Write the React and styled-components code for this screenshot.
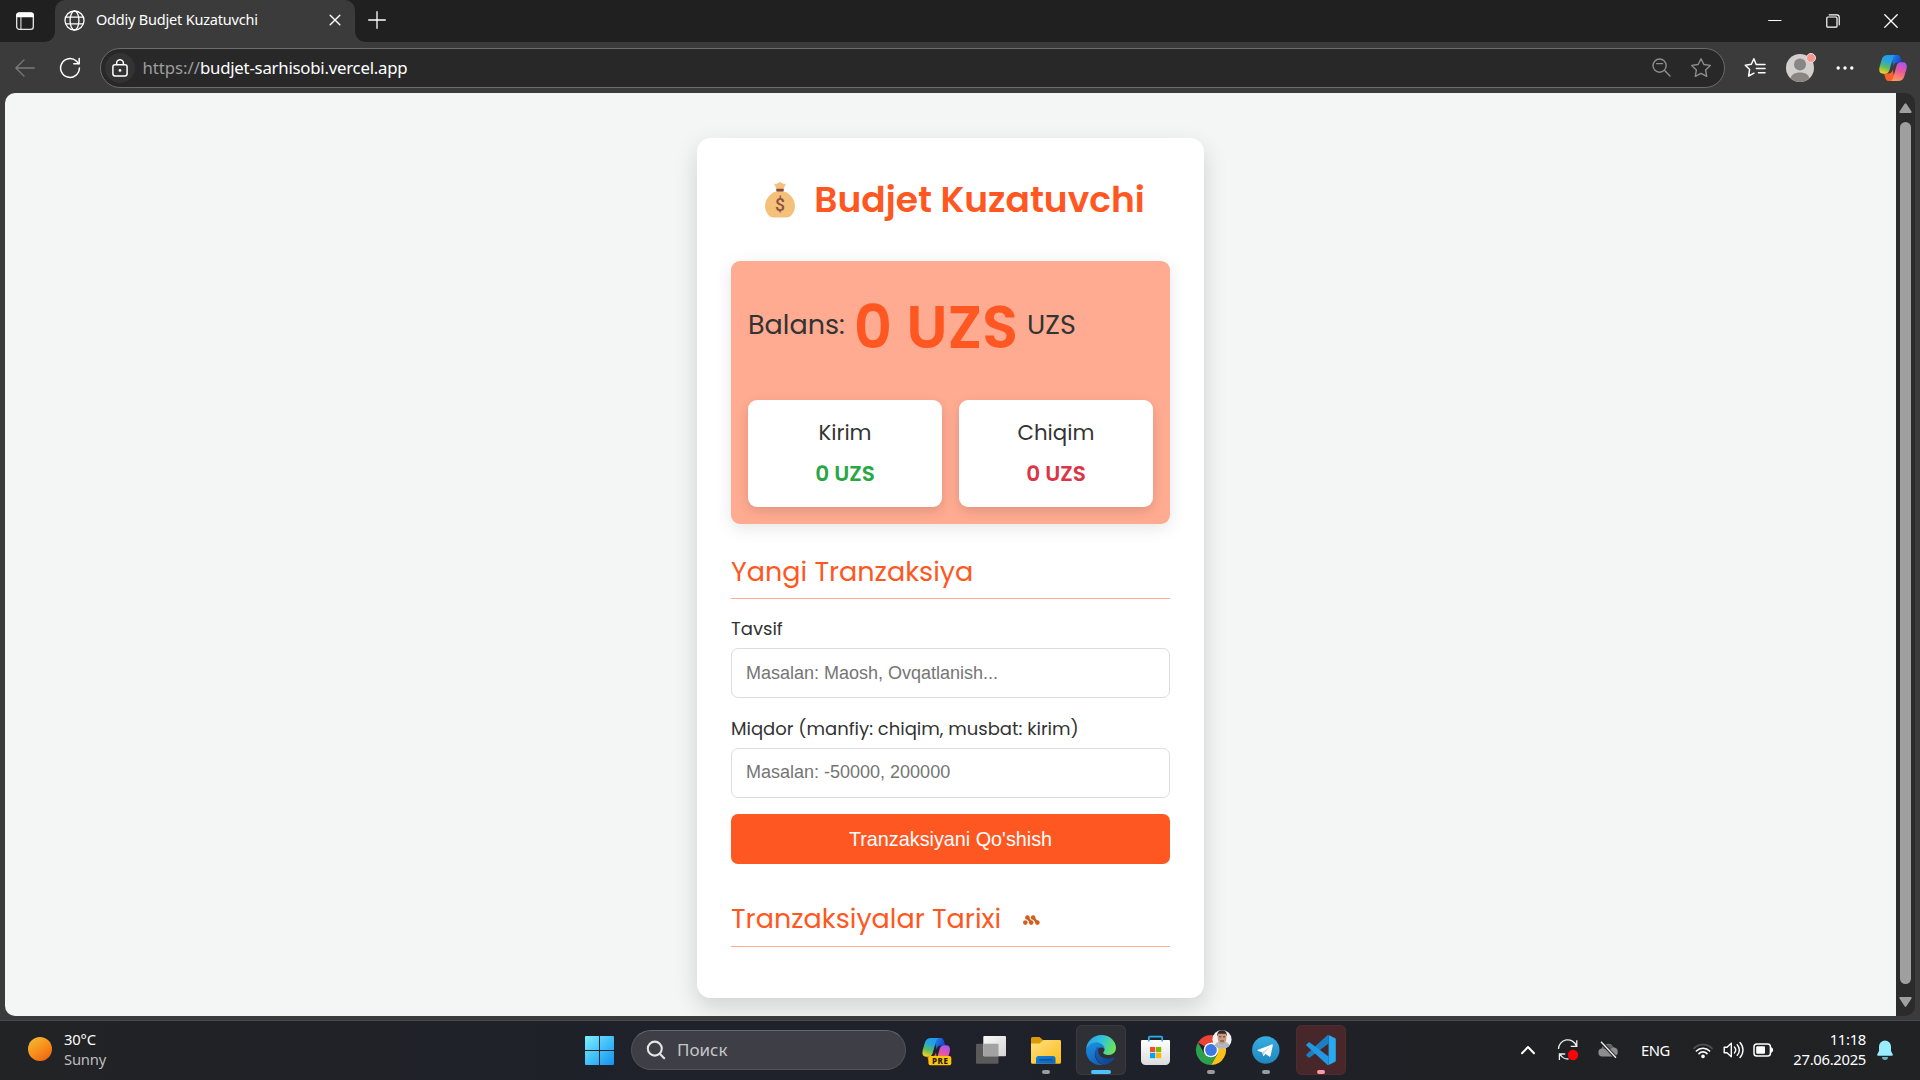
import React from "react";
import styled, { createGlobalStyle, css } from "styled-components";

const GlobalStyle = createGlobalStyle`
  *, *::before, *::after { box-sizing: border-box; }
  body { margin: 0; background: #202020; overflow: hidden; }
  svg { display: block; flex: none; }
`;

const uiFont = `"Noto Sans", "Open Sans", sans-serif`;
const pageFont = `Poppins, Inter, sans-serif`;
const formFont = `"Liberation Sans", Arial, sans-serif`;

const Desktop = styled.div`
  width: 1920px;
  height: 1080px;
  display: flex;
  flex-direction: column;
  background: #3b3b3b;
  font-family: ${uiFont};
  color: #fff;
`;

/* ---------- browser chrome ---------- */

const TabStrip = styled.div`
  height: 42px;
  flex: none;
  display: flex;
  background: #202020;
`;

const StripButton = styled.div`
  width: ${(p) => p.$width}px;
  height: ${(p) => p.$height || 42}px;
  padding-right: ${(p) => p.$nudge || 0}px;
  display: flex;
  align-items: center;
  justify-content: center;
`;

const Tab = styled.div`
  position: relative;
  width: 300px;
  height: 42px;
  padding: 0 13px 2px 8.5px;
  display: flex;
  align-items: center;
  background: #3b3b3b;
  border-radius: 10px 10px 0 0;

  &::before,
  &::after {
    content: "";
    position: absolute;
    bottom: 0;
    width: 10px;
    height: 10px;
  }
  &::before {
    left: -10px;
    background: radial-gradient(circle at 0 0, #202020 9.5px, #3b3b3b 10px);
  }
  &::after {
    right: -10px;
    background: radial-gradient(circle at 100% 0, #202020 9.5px, #3b3b3b 10px);
  }
`;

const TabTitle = styled.span`
  flex: 1;
  margin-left: 11.5px;
  padding-bottom: 2px;
  font-size: 14.5px;
  line-height: 20px;
  letter-spacing: -0.2px;
`;

const WindowControls = styled.div`
  margin-left: auto;
  display: flex;
`;

const Toolbar = styled.div`
  height: 51px;
  flex: none;
  display: flex;
  align-items: center;
  padding: 0 10px 0 11px;
`;

const ToolButton = styled.div`
  width: ${(p) => p.$width || 28}px;
  margin-left: ${(p) => p.$gap || 0}px;
  display: flex;
  justify-content: center;
`;

const AddressBar = styled.div`
  width: 1625px;
  height: 40px;
  margin-left: 16px;
  padding: 0 12px 0 4px;
  display: flex;
  align-items: center;
  border: 1px solid #6c6c6c;
  border-radius: 20px;
  background: #282828;
`;

const SiteInfo = styled.div`
  width: 30px;
  height: 30px;
  display: flex;
  align-items: center;
  justify-content: center;
  border-radius: 50%;
  background: #333;
`;

const Url = styled.div`
  flex: 1;
  margin-left: 7.5px;
  font-size: 16.8px;
  line-height: 24px;
  letter-spacing: -0.23px;
`;

const Scheme = styled.span`
  color: #9d9d9d;
  letter-spacing: -0.05px;
`;

const Avatar = styled.div`
  position: relative;
  width: 28px;
  height: 28px;
`;

const Badge = styled.span`
  position: absolute;
  top: -1px;
  right: -2px;
  width: 10px;
  height: 10px;
  border: 1px solid #e9e2e0;
  border-radius: 50%;
  background: #f8968f;
`;

/* ---------- page viewport ---------- */

const Frame = styled.div`
  height: 928px;
  flex: none;
  padding: 0 5px 4px;
  border-bottom: 1px solid #4a4a4a;
`;

const Viewport = styled.div`
  height: 923px;
  display: flex;
  overflow: hidden;
  border-radius: 10px;
  background: #2b2b2b;
`;

const Page = styled.main`
  flex: 1;
  padding-top: 45px;
  display: flex;
  justify-content: center;
  align-items: flex-start;
  overflow: hidden;
  background: #f4f6f5;
  font-family: ${pageFont};
  color: #333;
`;

const Scrollbar = styled.div`
  width: 19px;
  padding: 10px 0 9px;
  display: flex;
  flex-direction: column;
  align-items: center;
`;

const Thumb = styled.div`
  flex: 1;
  width: 11px;
  margin: 8px 0 12px;
  border-radius: 6px;
  background: #9f9f9f;
`;

const Card = styled.section`
  width: 507px;
  height: 860px;
  padding: 34px;
  border-radius: 14px;
  background: #fff;
  box-shadow: 0 9px 23px rgba(0, 0, 0, 0.15);
`;

const Title = styled.h1`
  margin: 0 0 35px;
  height: 54px;
  padding: 1px 0 0 8px;
  display: flex;
  align-items: center;
  justify-content: center;
  gap: 18px;
  color: #ff5722;
  font-size: 36px;
  font-weight: 600;
  line-height: 55px;
`;

const BalancePanel = styled.div`
  height: 263px;
  padding: 17px;
  border-radius: 9px;
  background: #ffab91;
  box-shadow: 0 4px 17px rgba(0, 0, 0, 0.1);
`;

const BalanceLine = styled.div`
  height: 98px;
  margin-bottom: 24px;
  display: flex;
  align-items: center;
  gap: 9px;
  font-size: 27px;
`;

const BalanceLabel = styled.span`
  padding-bottom: 5px;
  line-height: 40px;
`;

const BalanceValue = styled.span`
  padding-top: 2px;
  color: #ff5722;
  font-size: 59.4px;
  font-weight: 600;
  line-height: 90px;
`;

const Summary = styled.div`
  display: flex;
  gap: 17px;
`;

const SummaryCard = styled.div`
  flex: 1;
  height: 107px;
  padding-top: 17px;
  display: flex;
  flex-direction: column;
  gap: 9px;
  border-radius: 9px;
  background: #fff;
  box-shadow: 0 4px 12px rgba(0, 0, 0, 0.13);
  font-size: 21.3px;
  line-height: 32px;
  text-align: center;
`;

const Amount = styled.span`
  font-size: 21.6px;
  font-weight: 600;
  color: ${(p) => p.$color};
`;

const SectionHeading = styled.h2`
  height: 48px;
  margin: ${(p) => p.$top}px 0 0;
  display: flex;
  border-bottom: 1px solid #ffab91;
  color: #ff5722;
  font-size: 27px;
  font-weight: 400;
  line-height: ${(p) => p.$line || 40}px;
`;

const HistoryIcon = styled.svg`
  margin: 16px 0 0 22px;
`;

const Fields = styled.div`
  margin-top: 16px;
  display: flex;
  flex-direction: column;
  gap: 17px;
`;

const Field = styled.label`
  display: flex;
  flex-direction: column;
  gap: 6px;
  font-size: 18px;
  line-height: 27px;
`;

const Input = styled.input`
  width: 100%;
  height: 50px;
  padding: ${(p) => (p.$low ? "1px 13px 0 14px" : "0 13px 1px 14px")};
  border: 1px solid #ddd;
  border-radius: 7px;
  background: #fff;
  font-family: ${formFont};
  font-size: 18px;
  outline: none;

  &::placeholder { color: #757575; opacity: 1; }
`;

const SubmitButton = styled.button`
  width: 100%;
  height: 50px;
  margin-top: 16px;
  padding: 1px 0 0;
  border: 0;
  border-radius: 7px;
  background: #ff5722;
  color: #fff;
  font-family: ${formFont};
  font-size: 19.8px;
`;

/* ---------- taskbar ---------- */

const Taskbar = styled.footer`
  height: 59px;
  flex: none;
  padding: 0 26px 1px 0;
  display: flex;
  align-items: center;
  background: linear-gradient(90deg, #222325 0, #202226 12%, #1f212b 35%, #1f212a 62%, #202124 76%, #212224 100%);
`;

const Weather = styled.div`
  width: 575px;
  padding: 0 0 2px 28px;
  display: flex;
  align-items: center;
  gap: 12px;
`;

const Sun = styled.span`
  width: 24px;
  height: 24px;
  border-radius: 50%;
  background: linear-gradient(145deg, #eebc33 5%, #f8901c 50%, #f06a12 85%);
`;

const TwoLines = styled.div`
  display: flex;
  flex-direction: column;
  font-size: 14.8px;
  line-height: 20px;
  letter-spacing: ${(p) => p.$tracking || 0}px;
  ${(p) => p.$right && css`
    width: 74px;
    margin-left: 18px;
    padding-bottom: 2px;
    align-items: flex-end;
  `}
`;

const Muted = styled.span`
  color: #bdbdbd;
`;

const SearchBox = styled.div`
  width: 275px;
  height: 40px;
  margin: 0 5px 0 6px;
  padding-left: 13.5px;
  display: flex;
  align-items: center;
  gap: 11.5px;
  border: 1px solid #4f5158;
  border-top-color: #65666c;
  border-radius: 20px;
  background: #3d3e46;
  color: #c6c6c9;
  font-size: 17px;
  line-height: 24px;
`;

const Apps = styled.div`
  display: flex;
  gap: 5px;
`;

const AppTile = styled.div`
  position: relative;
  width: 50px;
  height: 50px;
  border-radius: 6px;
  background: ${(p) => p.$bg || "transparent"};
  box-shadow: ${(p) => (p.$outline ? `inset 0 0 0 1px ${p.$outline}` : "none")};
`;

const Running = styled.span`
  position: absolute;
  left: 50%;
  bottom: 1px;
  width: ${(p) => p.$width || 8}px;
  height: 4px;
  border-radius: 2px;
  transform: translateX(-50%);
  background: ${(p) => p.$color || "#9a9b9e"};
`;

const Tray = styled.div`
  margin-left: auto;
  display: flex;
  align-items: center;
`;

const TrayItem = styled.div`
  width: ${(p) => p.$width}px;
  margin-left: ${(p) => p.$gap || 0}px;
  display: flex;
  justify-content: center;
  font-size: 14.8px;
  line-height: 20px;
  letter-spacing: -0.45px;
`;

/* ---------- icons ---------- */

const Stroke = ({ w, h, color = "#fff", width = 1.4, children }) => (
  <svg width={w} height={h} viewBox={`0 0 ${w} ${h}`} fill="none" stroke={color} strokeWidth={width} strokeLinecap="round" strokeLinejoin="round">
    {children}
  </svg>
);

const starPath = "M11 1.7 L13.9 7.5 L20.3 8.4 L15.6 12.9 L16.7 19.3 L11 16.3 L5.3 19.3 L6.4 12.9 L1.7 8.4 L8.1 7.5 Z";

const CopilotShape = ({ id }) => (
  <>
    <defs>
      <linearGradient id={`${id}a`} x1="0.6" y1="0" x2="0.3" y2="1">
        <stop offset="0" stopColor="#1e9bf0" />
        <stop offset="0.35" stopColor="#2aa6d8" />
        <stop offset="0.65" stopColor="#5dbb63" />
        <stop offset="1" stopColor="#f6d21c" />
      </linearGradient>
      <linearGradient id={`${id}b`} x1="0.7" y1="0" x2="0.4" y2="1">
        <stop offset="0" stopColor="#a855f7" />
        <stop offset="0.45" stopColor="#e8579c" />
        <stop offset="1" stopColor="#ff9a5a" />
      </linearGradient>
      <linearGradient id={`${id}c`} x1="0" y1="0" x2="1" y2="0.5">
        <stop offset="0" stopColor="#1d8df0" />
        <stop offset="1" stopColor="#1c3fc4" />
      </linearGradient>
    </defs>
    <path d="M12 0 H18.5 C20.6 0 21.3 1.6 22 4 L23 7.5 H19 C16 7.5 15 9 14.3 11.5 Z" fill={`url(#${id}c)`} />
    <path d="M16 26 H9.5 C7.4 26 6.7 24.4 6 22 L5 18.5 H9 C12 18.5 13 17 13.7 14.5 Z" fill="#f8612c" />
    <path d="M9 0 H16.5 C14.8 0.4 14.2 2 13.5 4.5 L10.5 15 C9.8 17.4 8.6 18.7 6 18.7 H4 C0.3 18.7 -0.4 15.3 0.7 11.5 L2.6 5 C3.6 1.6 5.3 0 9 0 Z" fill={`url(#${id}a)`} />
    <path d="M19 26 H11.5 C13.2 25.6 13.8 24 14.5 21.5 L17.5 11 C18.2 8.6 19.4 7.3 22 7.3 H24 C27.7 7.3 28.4 10.7 27.3 14.5 L25.4 21 C24.4 24.4 22.7 26 19 26 Z" fill={`url(#${id}b)`} />
  </>
);

const MoneyBag = () => (
  <svg width="32" height="38" viewBox="0 0 32 38">
    <path d="M12.2 8.5 C12 6 10.6 4.2 10 2.6 C11.6 3.4 13 2.8 13.6 2 C14.2 2.6 14.6 2.2 16 0.6 C17.4 2.2 17.8 2.6 18.4 2 C19 2.8 20.4 3.4 22 2.6 C21.4 4.2 20 6 19.8 8.5 Z" fill="#f4c07a" />
    <path d="M16 10 C7.4 10 1 17.4 1 25 C1 31 4.8 36.6 10 36.6 H22 C27.2 36.6 31 31 31 25 C31 17.4 24.6 10 16 10 Z" fill="#f4c07a" />
    <rect x="12.2" y="7.7" width="7.6" height="2.8" rx="1" fill="#804a42" />
    <text x="16" y="30.2" textAnchor="middle" fontFamily="Roboto, sans-serif" fontSize="17.5" fontWeight="500" fill="#8a5142">$</text>
  </svg>
);

const Footprints = () => (
  <HistoryIcon width="17" height="10" viewBox="0 0 17 10" fill="#d0601f" stroke="#d0601f">
    <path d="M4.5 2.6 L8 7.4 M10.2 2.6 L14 7.4" strokeWidth="2.6" />
    <g stroke="none">
      <circle cx="4.4" cy="2.5" r="2.3" />
      <circle cx="10.1" cy="2.5" r="2.3" />
      <circle cx="2.3" cy="7.6" r="2.3" />
      <circle cx="8.2" cy="7.6" r="2.3" />
      <circle cx="14.4" cy="7.6" r="2.3" />
    </g>
  </HistoryIcon>
);

const Tile = ({ children }) => (
  <svg width="50" height="50" viewBox="0 0 50 50">{children}</svg>
);

const StartIcon = () => (
  <Tile>
    <defs>
      <linearGradient id="win" gradientUnits="userSpaceOnUse" x1="10" y1="11" x2="39" y2="40">
        <stop offset="0" stopColor="#7df0fc" />
        <stop offset="0.5" stopColor="#43c0f8" />
        <stop offset="1" stopColor="#1392f0" />
      </linearGradient>
    </defs>
    <path d="M10 12 a1 1 0 0 1 1-1 H24 V25 H10 Z M25 11 H38 a1 1 0 0 1 1 1 V25 H25 Z M10 26 H24 V40 H11 a1 1 0 0 1-1-1 Z M25 26 H39 V39 a1 1 0 0 1-1 1 H25 Z" fill="url(#win)" />
  </Tile>
);

const CopilotPreIcon = () => (
  <Tile>
    <g transform="translate(11.2 13)"><CopilotShape id="pre" /></g>
    <rect x="17.5" y="31" width="22.8" height="9.3" rx="2" fill="#ffc60a" />
    <text x="29.2" y="38.6" textAnchor="middle" fontFamily="Noto Sans, sans-serif" fontSize="8" fontWeight="800" letterSpacing="0.6" fill="#1d1a10">PRE</text>
  </Tile>
);

const TaskViewIcon = () => (
  <Tile>
    <defs>
      <linearGradient id="tvl" x1="0" y1="0" x2="1" y2="1"><stop offset="0" stopColor="#fafafa" /><stop offset="1" stopColor="#d4d4d4" /></linearGradient>
    </defs>
    <rect x="10" y="18.7" width="22.5" height="20" rx="1" fill="#5a5a5a" />
    <rect x="17.3" y="11" width="22.7" height="20.3" rx="1" fill="url(#tvl)" />
    <path d="M17.3 18.7 H32.5 V31.3 H18.3 a1 1 0 0 1-1-1 Z" fill="#a2a2a2" />
  </Tile>
);

const FolderIcon = () => (
  <Tile>
    <defs>
      <linearGradient id="fol" x1="0" y1="0" x2="1" y2="1"><stop offset="0" stopColor="#ffe084" /><stop offset="1" stopColor="#fbbc17" /></linearGradient>
      <linearGradient id="fob" x1="0" y1="0" x2="1" y2="1"><stop offset="0" stopColor="#1383dc" /><stop offset="1" stopColor="#0f62b6" /></linearGradient>
    </defs>
    <path d="M10 13.5 a1.5 1.5 0 0 1 1.5-1.5 H18.5 L22 15 H38.5 a1.5 1.5 0 0 1 1.5 1.5 V25 H10 Z" fill="#dc9a09" />
    <path d="M10 18.5 H18.5 L22.5 15 H38.5 a1.5 1.5 0 0 1 1.5 1.5 V37.2 a1.5 1.5 0 0 1-1.5 1.5 H11.5 a1.5 1.5 0 0 1-1.5-1.5 Z" fill="url(#fol)" />
    <path d="M15 38.7 V33.5 a2.5 2.5 0 0 1 2.5-2.5 H32 a2.5 2.5 0 0 1 2.5 2.5 V38.7 Z" fill="url(#fob)" />
    <rect x="18" y="34.2" width="13.5" height="1.2" rx="0.6" fill="#0a4c8c" />
  </Tile>
);

const EdgeIcon = () => (
  <Tile>
    <defs>
      <linearGradient id="ed1" x1="0" y1="0.2" x2="1" y2="0.5"><stop offset="0" stopColor="#2a9fe4" /><stop offset="0.5" stopColor="#2fc4dc" /><stop offset="1" stopColor="#6be35a" /></linearGradient>
      <linearGradient id="ed2" x1="0.2" y1="0" x2="0.5" y2="1"><stop offset="0" stopColor="#1b8fe0" /><stop offset="1" stopColor="#1163c0" /></linearGradient>
      <linearGradient id="ed3" x1="0" y1="0" x2="1" y2="0.6"><stop offset="0" stopColor="#1a5fb4" /><stop offset="1" stopColor="#0f4590" /></linearGradient>
    </defs>
    <path d="M10.1 25 C10.5 20.5 15 17.2 20.5 17.2 C26 17.2 29.5 20.5 29.2 24 C24 20 18 24 19 31 C20 36 24 39.5 27 39.8 C17 41.5 9.5 33.5 10.1 25 Z" fill="url(#ed2)" />
    <path d="M20.5 22.5 C17.5 28 20 38 28 39.7 C33 39.2 36.5 36.3 38.3 33.4 C38.8 32.6 38 32 37.2 32.4 C31 35.2 22.5 33 22.2 26.3 C22.1 24.5 22.5 23.3 23.2 22 Z" fill="url(#ed3)" />
    <path d="M10.1 24.5 C10.5 16.5 17 10 25.2 10 C34 10 40 16.4 40 22.8 C40 27.2 36.8 30 32.6 30 C29.2 30 27.2 28.8 27.2 27.8 C27.2 27 28.6 26.3 28.6 24 C28.6 20.4 25 17.4 20.4 17.4 C15 17.4 11.4 20.7 10.1 24.5 Z" fill="url(#ed1)" />
  </Tile>
);

const StoreIcon = () => (
  <Tile>
    <defs>
      <linearGradient id="stw" x1="0" y1="0" x2="0" y2="1"><stop offset="0" stopColor="#ffffff" /><stop offset="1" stopColor="#dcdcde" /></linearGradient>
    </defs>
    <path d="M10 16 a1 1 0 0 1 1-1 H38 a1 1 0 0 1 1 1 V35.5 a4.5 4.5 0 0 1-4.5 4.5 H14.5 a4.5 4.5 0 0 1-4.5-4.5 Z" fill="url(#stw)" />
    <path d="M17.8 16.5 V12.6 a1 1 0 0 1 1-1 H30.2 a1 1 0 0 1 1 1 V16.5" fill="none" stroke="#27b1ee" strokeWidth="1.7" />
    <rect x="19" y="22" width="5.2" height="5.2" fill="#f14f21" />
    <rect x="25" y="22" width="5.2" height="5.2" fill="#7eb900" />
    <rect x="19" y="28" width="5.2" height="5.2" fill="#00a3ee" />
    <rect x="25" y="28" width="5.2" height="5.2" fill="#feb800" />
  </Tile>
);

const ChromeIcon = () => (
  <Tile>
    <path d="M25 25 L12 17.5 A15 15 0 0 1 38 17.5 Z" fill="#ea4335" />
    <path d="M25 17.5 H38 A15 15 0 0 1 25 40 L31.5 28.8 Z" fill="#fbc116" />
    <path d="M12 17.5 A15 15 0 0 0 25 40 L31.5 28.8 L25 25 L18.5 28.8 Z" fill="#2da04e" />
    <circle cx="25" cy="25" r="7.3" fill="#fff" />
    <circle cx="25" cy="25" r="5.9" fill="#3c78e6" />
    <circle cx="36" cy="14.5" r="9.6" fill="#f1f1f3" />
    <path d="M28.7 20.6 C29.6 17.2 33 16.6 36 16.6 C39 16.6 42.4 17.2 43.3 20.6 A9.5 9.5 0 0 1 28.7 20.6 Z" fill="#b3b6bd" />
    <path d="M31.8 10 C31.8 7 34 6.2 36 6.2 C38.2 6.2 40.3 7 40.3 10 V14 C40.3 17 38 18.8 36 18.8 C34 18.8 31.8 17 31.8 14 Z" fill="#c9987c" />
    <path d="M31.4 11.5 C30.6 7 33.4 5.2 36 5.2 C39 5.2 41.4 7 40.7 11.5 L39.8 8.8 H32.3 Z" fill="#33272a" />
    <path d="M33 11.8 H35.2 M37 11.8 H39.2 M34.2 16 H38" stroke="#5b3c34" strokeWidth="1" />
  </Tile>
);

const TelegramIcon = () => (
  <Tile>
    <defs>
      <linearGradient id="tg" x1="0" y1="0" x2="0" y2="1"><stop offset="0" stopColor="#37aee2" /><stop offset="1" stopColor="#1e87c0" /></linearGradient>
    </defs>
    <circle cx="24.8" cy="25" r="13.7" fill="url(#tg)" />
    <path d="M17 24.8 L30.8 19.4 C31.5 19.2 32 19.6 31.8 20.5 L29.5 31 C29.3 31.8 28.8 32 28.2 31.6 L24.7 29 L23 30.7 C22.6 31.1 22.2 31 22.1 30.4 L21.2 27.2 L17.1 25.9 C16.4 25.7 16.4 25.1 17 24.8 Z" fill="#fff" />
    <path d="M21.4 27.2 L29 21.8 L23.6 27.6 L22.6 30.6 Z" fill="#bcd9ea" />
  </Tile>
);

const CodeIcon = () => (
  <Tile>
    <path d="M32.6 10 L39.2 13.2 a1 1 0 0 1 0.6 1 V35.8 a1 1 0 0 1-0.6 1 L32.6 40 Z" fill="#29a9f2" />
    <path d="M32.6 10 V18.4 L13.8 32.6 a1 1 0 0 1-1.2 0 L10.6 30.8 a1 1 0 0 1 0-1.5 L31 10.6 a1.6 1.6 0 0 1 1.6-0.6 Z" fill="#1c7fc4" />
    <path d="M32.6 40 V31.6 L13.8 17.4 a1 1 0 0 0-1.2 0 L10.6 19.2 a1 1 0 0 0 0 1.5 L31 39.4 a1.6 1.6 0 0 0 1.6 0.6 Z" fill="#2398e2" />
  </Tile>
);

const apps = [
  { name: "copilot", Icon: CopilotPreIcon },
  { name: "taskview", Icon: TaskViewIcon },
  { name: "explorer", Icon: FolderIcon, running: {} },
  { name: "edge", Icon: EdgeIcon, bg: "#2f3036", outline: "#3a3b40", running: { $width: 20, $color: "#4cc2ff" } },
  { name: "store", Icon: StoreIcon },
  { name: "chrome", Icon: ChromeIcon, running: {} },
  { name: "telegram", Icon: TelegramIcon, running: {} },
  { name: "code", Icon: CodeIcon, bg: "#472729", outline: "#4d2d2f", running: { $color: "#ff9aa4" } },
];

/* ---------- sections ---------- */

const BrowserHeader = () => (
  <>
    <TabStrip>
      <StripButton $width={55} $nudge={5} $height={41}>
        <svg width="20" height="20" viewBox="0 0 20 20">
          <rect x="1.7" y="2" width="16.6" height="16.4" rx="2.6" fill="none" stroke="#e8e8e8" strokeWidth="1.3" />
          <path d="M1.2 6.2 V4.2 A2.8 2.8 0 0 1 4 1.4 H16 A2.8 2.8 0 0 1 18.8 4.2 V6.2 Z" fill="#fff" />
          <path d="M5.9 6 V18" stroke="#cfcfcf" strokeWidth="1.2" />
        </svg>
      </StripButton>
      <Tab>
        <Stroke w={21} h={21} width={1.3}>
          <circle cx="10.5" cy="10.5" r="9.5" />
          <ellipse cx="10.5" cy="10.5" rx="4.4" ry="9.5" />
          <path d="M2 7.2 H19 M2 13.8 H19" />
        </Stroke>
        <TabTitle>Oddiy Budjet Kuzatuvchi</TabTitle>
        <Stroke w={14} h={12} width={1.4}><path d="M2.2 1.2 L11.8 10.8 M11.8 1.2 L2.2 10.8" /></Stroke>
      </Tab>
      <StripButton $width={44} $height={39}>
        <Stroke w={18} h={18} width={1.3}><path d="M9 0.7 V17.3 M0.7 9 H17.3" /></Stroke>
      </StripButton>
      <WindowControls>
        <StripButton $width={58} $height={40}>
          <Stroke w={14} h={14} width={1.1}><path d="M0.7 7.5 H13" /></Stroke>
        </StripButton>
        <StripButton $width={58} $height={42}>
          <Stroke w={14} h={14} width={1.2}>
            <rect x="0.8" y="3" width="10.2" height="10.2" rx="1" />
            <path d="M3.2 0.8 H11 A2.3 2.3 0 0 1 13.2 3 V10.8" />
          </Stroke>
        </StripButton>
        <StripButton $width={58} $height={42}>
          <Stroke w={14} h={14} width={1.3}><path d="M0.8 0.8 L13.2 13.2 M13.2 0.8 L0.8 13.2" /></Stroke>
        </StripButton>
      </WindowControls>
    </TabStrip>
    <Toolbar>
      <ToolButton>
        <Stroke w={20} h={18} color="#7b7b7b" width={1.3}><path d="M19.3 9 H1 M9 0.9 L0.9 9 L9 17.1" /></Stroke>
      </ToolButton>
      <ToolButton $gap={17}>
        <Stroke w={22} h={22} width={1.5}>
          <path d="M20.4 11 A9.4 9.4 0 1 1 17.3 4 L20 6.6" />
          <path d="M20.2 1.4 V6.8 H14.8" />
        </Stroke>
      </ToolButton>
      <AddressBar>
        <SiteInfo>
          <Stroke w={16} h={18} width={1.5}>
            <rect x="0.9" y="5.8" width="14.2" height="11.2" rx="2.2" />
            <path d="M4.6 5.6 V4.2 A3.4 3.4 0 0 1 11.4 4.2 V5.6" />
            <circle cx="8" cy="11.4" r="0.7" fill="#fff" />
          </Stroke>
        </SiteInfo>
        <Url><Scheme>https://</Scheme>budjet-sarhisobi.vercel.app</Url>
        <ToolButton $width={20}>
          <Stroke w={19} h={19} color="#8d8d8d" width={1.4}>
            <circle cx="7.6" cy="7.6" r="6.6" />
            <path d="M12.6 12.6 L18 18 M4.6 5.6 H10.6" />
          </Stroke>
        </ToolButton>
        <ToolButton $width={22} $gap={19}>
          <Stroke w={22} h={21} color="#8d8d8d" width={1.4}><path d={starPath} /></Stroke>
        </ToolButton>
      </AddressBar>
      <ToolButton $gap={16}>
        <Stroke w={22} h={21} width={1.5}>
          <path d="M14 7.5 L12.2 7.5 L9.9 1.7 L7.3 7.3 L1.3 8.2 L5.6 12.6 L4.6 19 L10 16.2" />
          <path d="M14.5 7.5 H21 M12.4 11.6 H21 M14.5 15.8 H21" />
        </Stroke>
      </ToolButton>
      <ToolButton $gap={17}>
        <Avatar>
          <svg width="28" height="28" viewBox="0 0 28 28">
            <defs><clipPath id="av"><circle cx="14" cy="14" r="14" /></clipPath></defs>
            <g clipPath="url(#av)">
              <rect width="28" height="28" fill="#d2d0ce" />
              <circle cx="14" cy="10.6" r="6" fill="#8a8683" />
              <path d="M4 28 C4 20.5 8.5 18.4 14 18.4 C19.5 18.4 24 20.5 24 28 Z" fill="#8a8683" />
            </g>
          </svg>
          <Badge />
        </Avatar>
      </ToolButton>
      <ToolButton $gap={17}>
        <svg width="18" height="4" viewBox="0 0 18 4" fill="#fff">
          <circle cx="2.2" cy="2" r="1.7" /><circle cx="9" cy="2" r="1.7" /><circle cx="15.8" cy="2" r="1.7" />
        </svg>
      </ToolButton>
      <ToolButton $gap={20}>
        <svg width="28" height="26" viewBox="0 0 28 26"><CopilotShape id="bar" /></svg>
      </ToolButton>
    </Toolbar>
  </>
);

const BudgetCard = () => (
  <Card>
    <Title><MoneyBag />Budjet Kuzatuvchi</Title>
    <BalancePanel>
      <BalanceLine>
        <BalanceLabel>Balans:</BalanceLabel>
        <BalanceValue>0 UZS</BalanceValue>
        <BalanceLabel>UZS</BalanceLabel>
      </BalanceLine>
      <Summary>
        <SummaryCard>Kirim<Amount $color="#28a745">0 UZS</Amount></SummaryCard>
        <SummaryCard>Chiqim<Amount $color="#dc3545">0 UZS</Amount></SummaryCard>
      </Summary>
    </BalancePanel>
    <SectionHeading $top={27} $line={42}>Yangi Tranzaksiya</SectionHeading>
    <Fields>
      <Field>
        Tavsif
        <Input $low type="text" placeholder="Masalan: Maosh, Ovqatlanish..." />
      </Field>
      <Field>
        Miqdor (manfiy: chiqim, musbat: kirim)
        <Input type="text" placeholder="Masalan: -50000, 200000" />
      </Field>
    </Fields>
    <SubmitButton type="button">Tranzaksiyani Qo'shish</SubmitButton>
    <SectionHeading $top={35}>Tranzaksiyalar Tarixi<Footprints /></SectionHeading>
  </Card>
);

const SystemTray = () => (
  <Tray>
    <TrayItem $width={20}>
      <Stroke w={16} h={10} width={2}><path d="M2 8.3 L8 2 L14 8.3" /></Stroke>
    </TrayItem>
    <TrayItem $width={24} $gap={18}>
      <svg width="22" height="22" viewBox="0 0 22 22" fill="none" stroke="#f0f0f0" strokeWidth="1.3">
        <path d="M1.5 10 A9.2 9.2 0 0 1 19.4 7 M19.8 1.2 V7.4 H13.8" />
        <path d="M11.5 20 A9.2 9.2 0 0 1 3.2 15.5 M2.4 21 V15 H8.2" />
        <circle cx="16" cy="16" r="5.2" fill="#fa0505" stroke="none" />
      </svg>
    </TrayItem>
    <TrayItem $width={24} $gap={16}>
      <svg width="22" height="18" viewBox="0 0 22 18">
        <path d="M5 15.5 A4 4 0 0 1 4.6 7.6 A6.4 6.4 0 0 1 16.4 6.2 A4.7 4.7 0 0 1 17 15.5 Z" fill="#8d8d8f" />
        <path d="M5 7.5 A6.4 6.4 0 0 1 16.4 6.2 L12 9 Z" fill="#5f6062" />
        <path d="M4 0.8 L19 16.8" stroke="#202124" strokeWidth="3.4" />
        <path d="M4 0.8 L19 16.8" stroke="#f2f2f2" strokeWidth="1.4" />
      </svg>
    </TrayItem>
    <TrayItem $width={29} $gap={21}>ENG</TrayItem>
    <TrayItem $width={22} $gap={22}>
      <svg width="20" height="17" viewBox="0 0 20 17" fill="none" strokeWidth="1.6" strokeLinecap="round">
        <path d="M1 6.4 A12.4 12.4 0 0 1 19 6.4" stroke="#55565a" />
        <path d="M3.4 9 A9.2 9.2 0 0 1 16.6 9" stroke="#fff" />
        <path d="M6 11.6 A5.6 5.6 0 0 1 14 11.6" stroke="#fff" />
        <circle cx="10" cy="14.4" r="1.8" fill="#fff" />
      </svg>
    </TrayItem>
    <TrayItem $width={22} $gap={8}>
      <Stroke w={21} h={18} width={1.4}>
        <path d="M1.2 6.2 H4 L8.3 2.2 V15.8 L4 11.8 H1.2 Z" />
        <path d="M11.4 6 A4.5 4.5 0 0 1 11.4 12 M14.2 3.7 A7.6 7.6 0 0 1 14.2 14.3 M17 1.5 A11 11 0 0 1 17 16.5" />
      </Stroke>
    </TrayItem>
    <TrayItem $width={22} $gap={8}>
      <svg width="21" height="14" viewBox="0 0 21 14">
        <rect x="1" y="1" width="16.4" height="12" rx="2.8" fill="none" stroke="#fff" strokeWidth="1.5" />
        <rect x="3.2" y="3.2" width="8.8" height="7.6" rx="1" fill="#fff" />
        <path d="M18.4 4.6 A3 3 0 0 1 18.4 9.4 Z" fill="#fff" stroke="#fff" />
      </svg>
    </TrayItem>
    <TwoLines $right $tracking={-0.3}>
      <span>11:18</span>
      <span>27.06.2025</span>
    </TwoLines>
    <TrayItem $width={18} $gap={10}>
      <svg width="16" height="20" viewBox="0 0 16 20" fill="#99ebff">
        <path d="M8 0.4 A6 6 0 0 1 14 6.4 V11 L15.8 14.6 C16 15.2 15.7 15.8 15 15.8 H1 C0.3 15.8 0 15.2 0.2 14.6 L2 11 V6.4 A6 6 0 0 1 8 0.4 Z" />
        <path d="M5 17 H11 A3 3 0 0 1 5 17 Z" fill="#5fb3c9" />
      </svg>
    </TrayItem>
  </Tray>
);

export default function App() {
  return (
    <Desktop>
      <GlobalStyle />
      <BrowserHeader />
      <Frame>
        <Viewport>
          <Page><BudgetCard /></Page>
          <Scrollbar>
            <svg width="13" height="11" viewBox="0 0 13 11" fill="#9f9f9f"><path d="M5.6 0.8 Q6.5 -0.3 7.4 0.8 L12.5 8.6 Q12.9 10 11.6 10 H1.4 Q0.1 10 0.5 8.6 Z" /></svg>
            <Thumb />
            <svg width="13" height="11" viewBox="0 0 13 11" fill="#9f9f9f"><path d="M5.6 10.2 Q6.5 11.3 7.4 10.2 L12.5 2.4 Q12.9 1 11.6 1 H1.4 Q0.1 1 0.5 2.4 Z" /></svg>
          </Scrollbar>
        </Viewport>
      </Frame>
      <Taskbar>
        <Weather>
          <Sun />
          <TwoLines $tracking={-0.2}>
            <span>30°C</span>
            <Muted>Sunny</Muted>
          </TwoLines>
        </Weather>
        <AppTile><StartIcon /></AppTile>
        <SearchBox>
          <Stroke w={20} h={20} color="#e4e4e6" width={2.1}>
            <circle cx="8.8" cy="8.6" r="7" />
            <path d="M13.8 13.8 L18.2 18.2" />
          </Stroke>
          Поиск
        </SearchBox>
        <Apps>
          {apps.map(({ name, Icon, bg, outline, running }) => (
            <AppTile key={name} $bg={bg} $outline={outline}>
              <Icon />
              {running && <Running {...running} />}
            </AppTile>
          ))}
        </Apps>
        <SystemTray />
      </Taskbar>
    </Desktop>
  );
}
